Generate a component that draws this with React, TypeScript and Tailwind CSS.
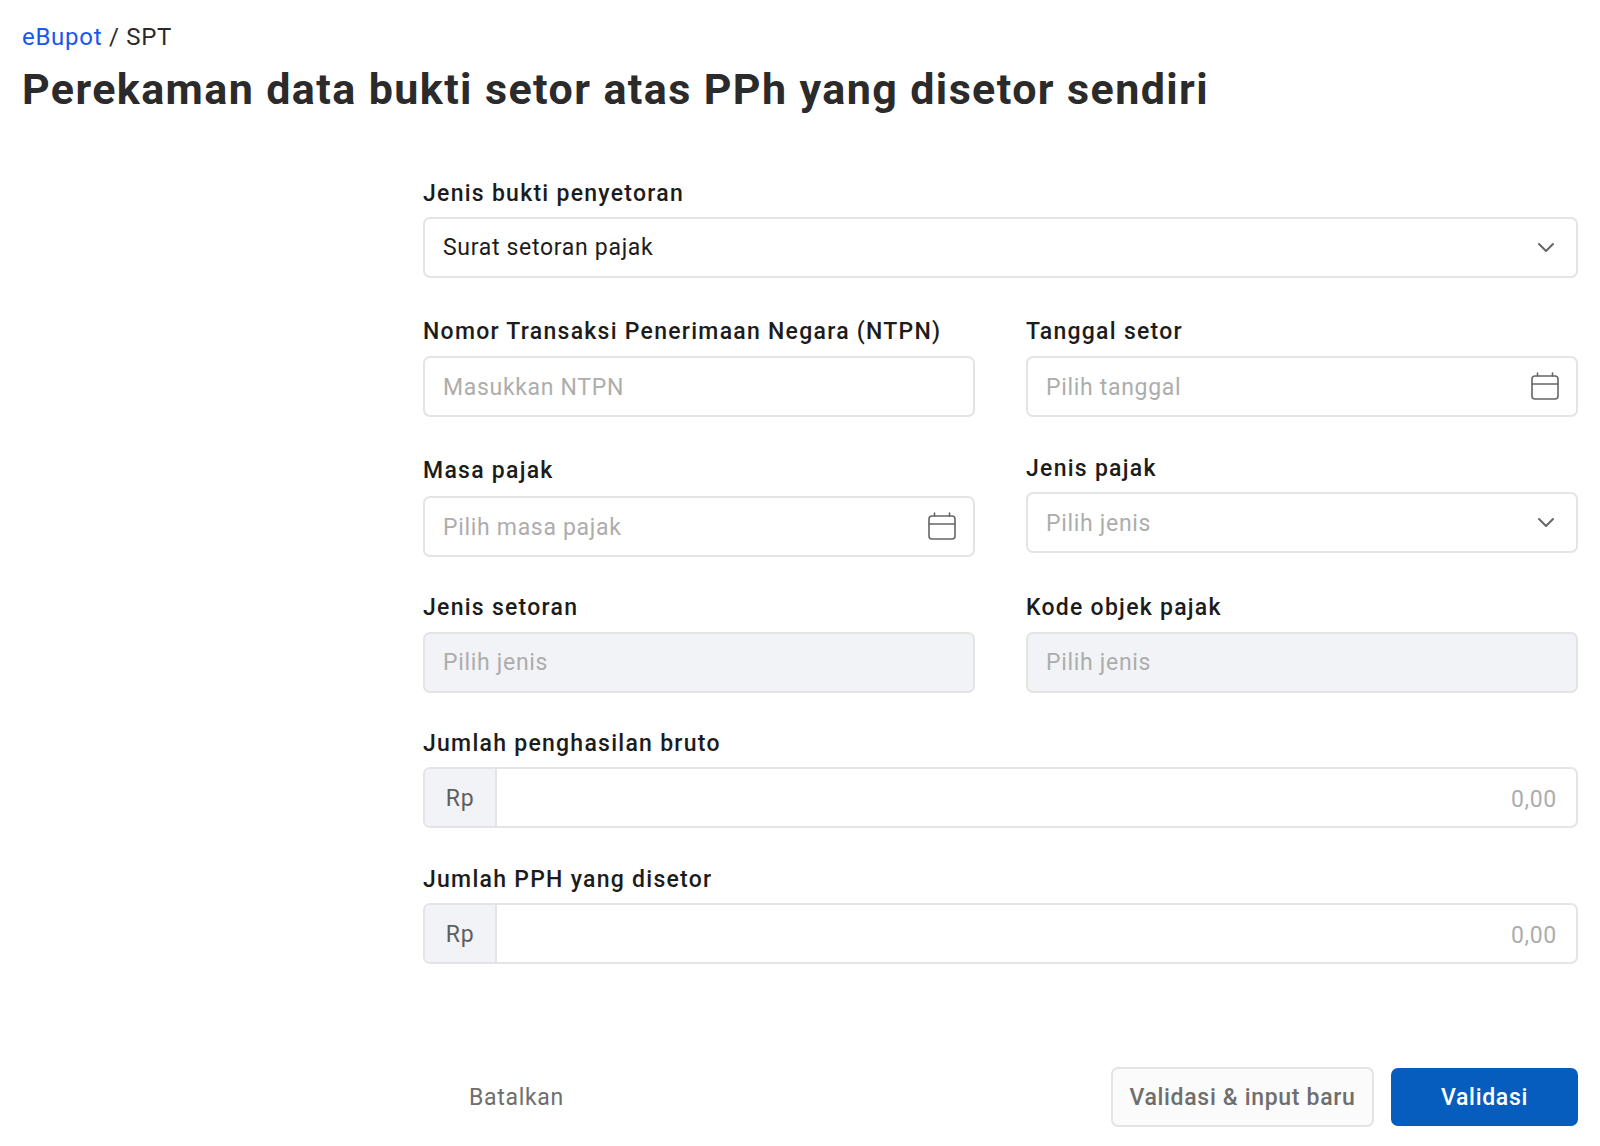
import React from "react"

const labelCls = "block text-[23px] leading-[28px] font-medium tracking-[0.055em] text-[#1c1c1c]"
const boxCls = "flex h-[61px] items-center rounded-[7px] border-2 border-[#e4e4e4] px-[18px] text-[23px] tracking-[0.03em]"

function Chevron() {
  return (
    <svg width="18" height="11" viewBox="0 0 18 11" fill="none" className="ml-auto mr-[3px]">
      <path d="M2 2l7 7 7-7" stroke="#666" strokeWidth="2" strokeLinecap="round" strokeLinejoin="round" />
    </svg>
  )
}

function CalendarIcon() {
  return (
    <svg width="28" height="28" viewBox="0 0 28 28" fill="none" className="-mr-[1px] -mt-[2px] ml-auto">
      <rect x="1" y="4" width="26" height="23" rx="3" stroke="#666" strokeWidth="1.6" />
      <path d="M1 12h26M6.5 1v3M21.5 1v3" stroke="#666" strokeWidth="1.6" strokeLinecap="round" />
    </svg>
  )
}

function Field({ label, placeholder, value, icon, disabled, className, boxClass, textClass }: {
  label: string
  placeholder?: string
  value?: string
  icon?: React.ReactNode
  disabled?: boolean
  className?: string
  boxClass?: string
  textClass?: string
}) {
  return (
    <div className={className}>
      <label className={labelCls}>{label}</label>
      <div className={`${boxCls} ${boxClass ?? "mt-[10px]"} ${disabled ? "bg-[#f2f3f6]" : "bg-white"} ${value ? "text-[#1c1c1c]" : "text-[#adadad]"}`}>
        <span className={textClass}>{value ?? placeholder}</span>
        {icon}
      </div>
    </div>
  )
}

function MoneyField({ label, className }: { label: string; className?: string }) {
  return (
    <div className={className}>
      <label className={labelCls}>{label}</label>
      <div className="mt-[9px] flex h-[61px] overflow-hidden rounded-[7px] border-2 border-[#e4e4e4] text-[23px] tracking-[0.03em]">
        <div className="flex w-[72px] items-center justify-center border-r-2 border-[#e4e4e4] bg-[#f2f3f6] pt-[4px] text-[#5f5f5f]">Rp</div>
        <div className="flex flex-1 items-center justify-end px-[19px] pt-[6px] text-[#adadad]">0,00</div>
      </div>
    </div>
  )
}

export default function App() {
  return (
    <div className="min-h-[1146px] bg-white pl-[22px] pr-[22px] pt-[21px] font-['Roboto',sans-serif]">
      <div className="text-[24px] leading-[32px] tracking-[0.03em] text-[#2a2a2a]">
        <span className="text-[#1a56f0]">eBupot</span> / SPT
      </div>
      <h1 className="mt-[8px] text-[43px] leading-[56px] font-bold tracking-[1.4px] text-[#2b2b2b]">
        Perekaman data bukti setor atas PPh yang disetor sendiri
      </h1>

      <div className="ml-[401px] mt-[63px]">
        <Field boxClass="mt-[9px]" textClass="pt-[2px]" label="Jenis bukti penyetoran" value="Surat setoran pajak" icon={<Chevron />} />

        <div className="mt-[40px] grid grid-cols-2 gap-x-[51px]">
          <Field textClass="pt-[4px]" label="Nomor Transaksi Penerimaan Negara (NTPN)" placeholder="Masukkan NTPN" />
          <Field textClass="pt-[4px]" label="Tanggal setor" placeholder="Pilih tanggal" icon={<CalendarIcon />} />
        </div>

        <div className="mt-[40px] grid grid-cols-2 items-start gap-x-[51px]">
          <Field boxClass="mt-[11px]" textClass="pt-[4px]" label="Masa pajak" placeholder="Pilih masa pajak" icon={<CalendarIcon />} />
          <Field className="-mt-[2px]" boxClass="mt-[9px]" textClass="pt-[3px]" label="Jenis pajak" placeholder="Pilih jenis" icon={<Chevron />} />
        </div>

        <div className="mt-[37px] grid grid-cols-2 gap-x-[51px]">
          <Field textClass="pt-[2px]" label="Jenis setoran" placeholder="Pilih jenis" disabled />
          <Field textClass="pt-[2px]" label="Kode objek pajak" placeholder="Pilih jenis" disabled />
        </div>

        <MoneyField className="mt-[37px]" label="Jumlah penghasilan bruto" />
        <MoneyField className="mt-[38px]" label="Jumlah PPH yang disetor" />

        <div className="mt-[103px] flex items-center">
          <button className="ml-[46px] pt-[2px] text-[23px] tracking-[0.03em] text-[#6e6e6e]">Batalkan</button>
          <button className="ml-auto h-[60px] w-[263px] rounded-[7px] border-2 border-[#e4e4e4] bg-[#fbfbfb] pt-[2px] text-[23px] font-medium tracking-[0.03em] text-[#6e6e6e]">
            Validasi &amp; input baru
          </button>
          <button className="ml-[17px] h-[58px] w-[187px] rounded-[7px] bg-[#065dbe] pt-[2px] text-[23px] font-medium tracking-[0.03em] text-white">
            Validasi
          </button>
        </div>
      </div>
    </div>
  )
}
